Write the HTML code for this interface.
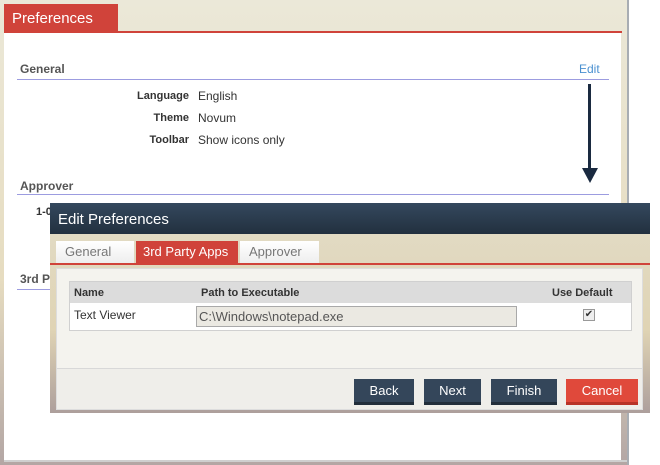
<!DOCTYPE html>
<html><head><style>
*{margin:0;padding:0;box-sizing:border-box}
body{width:660px;height:465px;position:relative;overflow:hidden;background:#fff;font-family:"Liberation Sans",sans-serif;font-size:12px;color:#333}
.a{position:absolute}
</style></head><body>
<div class="a" style="left:0;top:0;width:629px;height:465px;background:linear-gradient(#ebe8d8,#e6dcc0 60%,#b3a6a4);"></div>
<div class="a" style="left:627px;top:0;width:2px;height:465px;background:#a8adb3"></div>
<div class="a" style="left:4px;top:4px;width:114px;height:28px;background:#d0433a;color:#fff;font-size:15px;padding:6px 0 0 8px">Preferences</div>
<div class="a" style="left:4px;top:31px;width:618px;height:2px;background:#d0433a"></div>
<div class="a" style="left:4px;top:33px;width:617px;height:428px;background:#fff"></div>
<div class="a" style="left:4px;top:460px;width:623px;height:2px;background:#cfcfcf"></div>
<div class="a" style="left:20px;top:62px;font-weight:bold;color:#555">General</div>
<div class="a" style="left:579px;top:62px;color:#4a90d0">Edit</div>
<div class="a" style="left:17px;top:79px;width:592px;height:1px;background:#9c9ce0"></div>
<div class="a" style="left:100px;top:85px;width:89px;text-align:right;font-weight:bold;font-size:11px;line-height:22px">Language<br>Theme<br>Toolbar</div>
<div class="a" style="left:198px;top:85px;line-height:22px">English<br>Novum<br>Show icons only</div>
<div class="a" style="left:588px;top:84px;width:3px;height:86px;background:#1a2a40"></div>
<div class="a" style="left:582px;top:168px;width:0;height:0;border-left:8px solid transparent;border-right:8px solid transparent;border-top:15px solid #1a2a40"></div>
<div class="a" style="left:20px;top:179px;font-weight:bold;color:#555">Approver</div>
<div class="a" style="left:17px;top:194px;width:592px;height:1px;background:#9c9ce0"></div>
<div class="a" style="left:36px;top:206px;font-weight:bold;font-size:11px">1-0</div>
<div class="a" style="left:20px;top:272px;font-weight:bold;color:#555">3rd P</div>
<div class="a" style="left:17px;top:289px;width:40px;height:1px;background:#9c9ce0"></div>

<div class="a" style="left:50px;top:203px;width:600px;height:210px;background:linear-gradient(#e2dcc8,#e0d4b4 60%,#ad9f9c)"></div>
<div class="a" style="left:50px;top:203px;width:600px;height:31px;background:linear-gradient(#34485e,#22303f);color:#fff;font-size:15px;padding:8px 0 0 8px">Edit Preferences</div>
<div class="a" style="left:56px;top:241px;width:78px;height:22px;background:linear-gradient(#fff,#eee);color:#777;font-size:13px;padding:3px 0 0 9px">General</div>
<div class="a" style="left:136px;top:241px;width:102px;height:22px;background:#d0433a;color:#fff;font-size:13px;padding:3px 0 0 7px">3rd Party Apps</div>
<div class="a" style="left:240px;top:241px;width:79px;height:22px;background:linear-gradient(#fff,#eee);color:#777;font-size:13px;padding:3px 0 0 9px">Approver</div>
<div class="a" style="left:50px;top:263px;width:600px;height:2px;background:#d0433a"></div>
<div class="a" style="left:56px;top:268px;width:587px;height:142px;background:#f4f3ee;border:1px solid #ddd"></div>
<div class="a" style="left:57px;top:368px;width:585px;height:41px;background:#efeeea;border-top:1px solid #d8d8d8"></div>
<div class="a" style="left:69px;top:281px;width:563px;height:50px;border:1px solid #d0d0d0;background:#fff"></div>
<div class="a" style="left:70px;top:282px;width:561px;height:21px;background:#dcdcdc;font-weight:bold;font-size:11px"><span class="a" style="left:4px;top:5px">Name</span><span class="a" style="left:131px;top:5px">Path to Executable</span><span class="a" style="left:482px;top:5px">Use Default</span></div>
<div class="a" style="left:74px;top:308px">Text Viewer</div>
<div class="a" style="left:196px;top:306px;width:321px;height:21px;background:#ebe9e2;border:1px solid #a9a9a9;color:#555;font-size:13px;padding:2px 0 0 2px">C:\Windows\notepad.exe</div>
<div class="a" style="left:583px;top:309px;width:12px;height:12px;border:1px solid #999;background:#eee;font-size:10px;line-height:10px;text-align:center">✔</div>
<div class="a" style="left:354px;top:379px;width:60px;height:26px;background:#34465a;border-bottom:3px solid #222e3b;color:#fff;text-align:center;padding-top:4px;font-size:13px">Back</div>
<div class="a" style="left:424px;top:379px;width:57px;height:26px;background:#34465a;border-bottom:3px solid #222e3b;color:#fff;text-align:center;padding-top:4px;font-size:13px">Next</div>
<div class="a" style="left:491px;top:379px;width:66px;height:26px;background:#34465a;border-bottom:3px solid #222e3b;color:#fff;text-align:center;padding-top:4px;font-size:13px">Finish</div>
<div class="a" style="left:566px;top:379px;width:72px;height:26px;background:#e0493b;border-bottom:3px solid #b83328;color:#fff;text-align:center;padding-top:4px;font-size:13px">Cancel</div>
</body></html>
